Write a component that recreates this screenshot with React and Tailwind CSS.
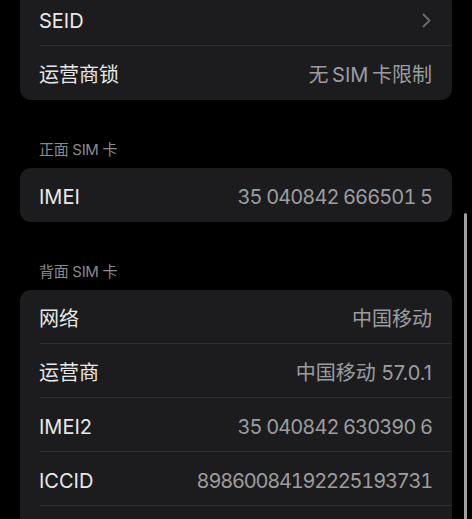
import React from 'react';

const font = { fontFamily: 'Inter, "Noto Sans CJK SC", sans-serif' };

const sections = [
  {
    header: null,
    rows: [
      { label: 'SEID', chevron: true },
      { label: '运营商锁', value: '无\u2009SIM\u2009卡限制' },
    ],
  },
  {
    header: '正面 SIM 卡',
    rows: [{ label: 'IMEI', value: '35 040842 666501 5', num: true }],
  },
  {
    header: '背面 SIM 卡',
    rows: [
      { label: '网络', value: '中国移动' },
      { label: '运营商', value: '中国移动 57.0.1' },
      { label: 'IMEI2', value: '35 040842 630390 6', num: true },
      { label: 'ICCID', value: '89860084192225193731', num: true, tight: true },
      { label: '', value: '' },
    ],
  },
];

const Chevron = () => (
  <svg width="9" height="15" viewBox="0 0 9 15" fill="none">
    <path d="M1.5 1.5L7.5 7.5L1.5 13.5" stroke="#6b6b70" strokeWidth="1.8" strokeLinecap="round" strokeLinejoin="round" />
  </svg>
);

const Row = ({ row, last }) => (
  <div className="relative flex h-[54px] items-center justify-between pl-[19px] pr-[20px] pt-[4px]">
    <span className="text-[20px] text-[#e8e8e8]">{row.label}</span>
    {row.chevron ? (
      <span className="pr-[1px] pb-[2px]"><Chevron /></span>
    ) : (
      <span
        className={`text-[20px] text-[#9d9d9f] ${row.num ? 'tabular-nums' : ''} ${
          row.tight ? 'tracking-[-1.2px]' : row.num ? 'tracking-[-0.9px]' : ''
        }`}
      >
        {row.value}
      </span>
    )}
    {!last && <div className="absolute bottom-0 left-[20px] right-0 h-px bg-[#2e2e30]" />}
  </div>
);

export default function App() {
  return (
    <div className="relative h-[519px] w-[472px] overflow-hidden bg-black" style={font}>
      <div className="-mt-[8px] flex flex-col px-[20px]">
        {sections.map((s, i) => (
          <div key={i}>
            {s.header && (
              <div className="pt-[41px] pb-[9px] pl-[19px] text-[15px] leading-[18px] tracking-[-0.3px] text-[#8a8a8e]">
                {s.header}
              </div>
            )}
            <div className="overflow-hidden rounded-[11px] bg-[#1c1c1e]">
              {s.rows.map((r, j) => (
                <Row key={j} row={r} last={j === s.rows.length - 1} />
              ))}
            </div>
          </div>
        ))}
      </div>
      <div className="absolute right-[5px] top-[213px] h-[320px] w-[3px] rounded-full bg-[#a0a0a0]" />
    </div>
  );
}
